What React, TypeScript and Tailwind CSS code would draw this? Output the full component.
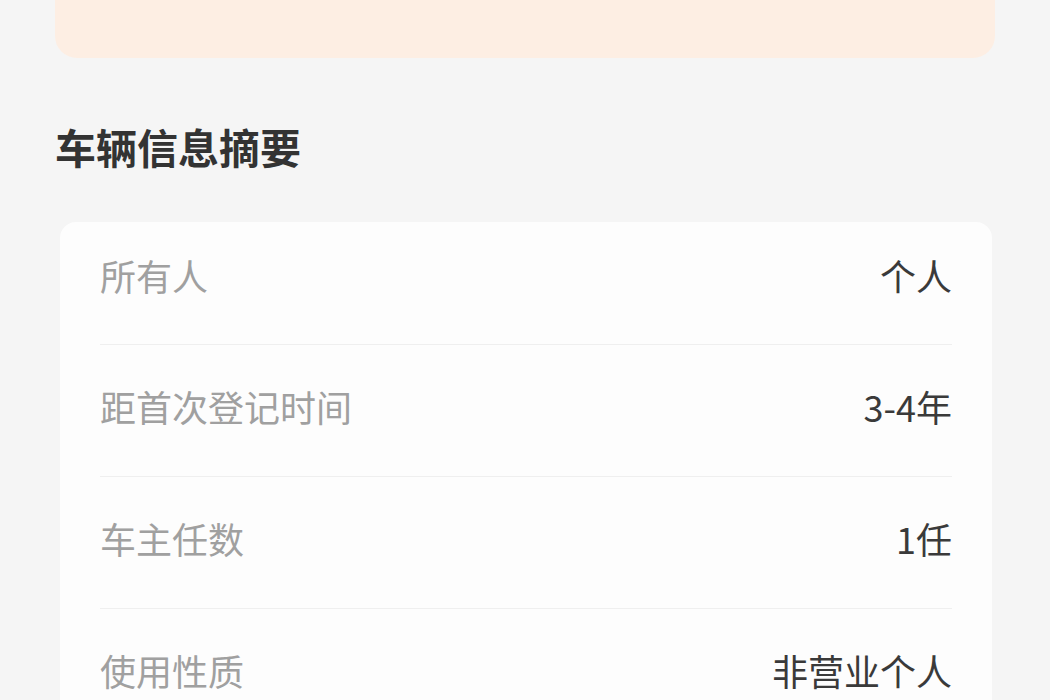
const rows = [
  { label: "所有人", value: "个人", first: true },
  { label: "距首次登记时间", value: "3-4年" },
  { label: "车主任数", value: "1任" },
  { label: "使用性质", value: "非营业个人" },
];

export default function App() {
  return (
    <div
      className="min-h-screen bg-[#f5f5f5] px-[55px]"
      style={{ fontFamily: '"Noto Sans CJK SC", "Noto Sans", sans-serif' }}
    >
      <div className="h-[58px] rounded-b-[22px] bg-[#fdeee3]" />

      <h2 className="mt-[68px] text-[41px] font-bold leading-[41px] text-[#333333]">
        车辆信息摘要
      </h2>

      <div className="mt-[55px] ml-[5px] mr-[3px] rounded-[16px] bg-[#fdfdfd]">
        {rows.map((row, i) => (
          <div key={row.label} className="px-[40px]">
            <div
              className={
                "flex items-center justify-between " +
                (row.first ? "h-[123px] pb-[16px]" : "h-[132px] pb-[10px]") +
                (i < rows.length - 1 ? " border-b border-[#efefef]" : "")
              }
            >
              <span className="text-[36px] leading-none text-[#a0a0a0]">{row.label}</span>
              <span className="text-[36px] leading-none text-[#3a3a3a]">{row.value}</span>
            </div>
          </div>
        ))}
      </div>
    </div>
  );
}
